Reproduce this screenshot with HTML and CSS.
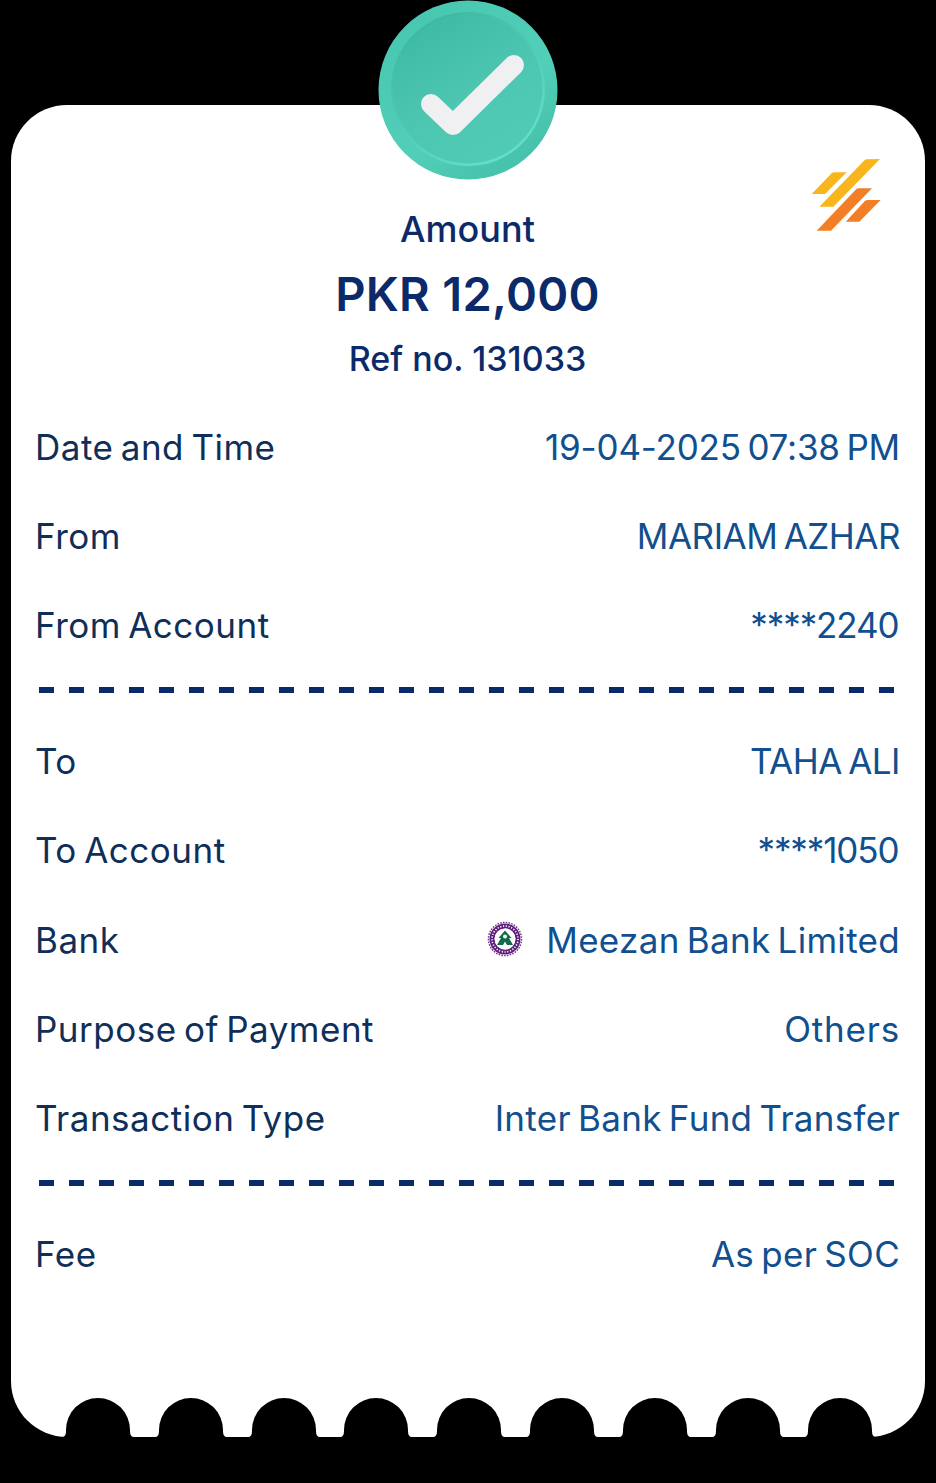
FILE: index.html
```html
<!DOCTYPE html>
<html lang="en">
<head>
<meta charset="utf-8">
<title>Receipt</title>
<link rel="stylesheet" href="styles.css">
</head>
<body>
<main class="card">
  <svg class="badge" viewBox="0 0 180 180" aria-hidden="true">
    <defs>
      <linearGradient id="rim" x1="0.15" y1="0" x2="0.85" y2="1">
        <stop offset="0" stop-color="#47c6af"/>
        <stop offset="0.6" stop-color="#52cfb8"/>
        <stop offset="1" stop-color="#43bea8"/>
      </linearGradient>
      <linearGradient id="ring" x1="0.2" y1="0" x2="0.8" y2="1">
        <stop offset="0" stop-color="#3ab5a0"/>
        <stop offset="0.5" stop-color="#4fcdb7"/>
        <stop offset="1" stop-color="#66e2cd"/>
      </linearGradient>
      <linearGradient id="face" x1="0.2" y1="0" x2="0.8" y2="1">
        <stop offset="0" stop-color="#3eb9a5"/>
        <stop offset="0.55" stop-color="#4dc7b1"/>
        <stop offset="1" stop-color="#52cbb6"/>
      </linearGradient>
    </defs>
    <circle cx="90" cy="90" r="89.5" fill="url(#rim)"/>
    <circle cx="90" cy="89" r="77" fill="url(#ring)"/>
    <circle cx="90" cy="89" r="74.5" fill="url(#face)"/>
    <path d="M53 104 L75 125 L136 65" fill="none" stroke="#f0f0f2" stroke-width="20" stroke-linecap="round" stroke-linejoin="round"/>
  </svg>
  <svg class="logo" viewBox="0 0 330 330" aria-hidden="true">
    <path fill="#f9b51c" d="M65 162 L125 100 Q128 97 133 97 L170 97 L105 162 Z"/>
    <path fill="#f9b51c" d="M88 200 L222 62 Q226 58 232 58 L270 57 L130 200 Z"/>
    <path fill="#f27f25" d="M80 272 L197 149 Q201 145 207 145 L246 145 L123 272 Z"/>
    <path fill="#f27f25" d="M167 245 L224 184 Q228 180 234 180 L272 180 L208 245 Z"/>
  </svg>

  <header class="summary">
    <p class="summary-label">Amount</p>
    <p class="summary-amount">PKR 12,000</p>
    <p class="summary-ref">Ref no. 131033</p>
  </header>

  <section class="rows rows-first">
    <div class="row"><span class="key">Date and Time</span><span class="val val-date">19-04-2025 07:38 PM</span></div>
    <div class="row"><span class="key">From</span><span class="val val-caps">MARIAM AZHAR</span></div>
    <div class="row"><span class="key">From Account</span><span class="val val-mask">****2240</span></div>
  </section>
  <div class="dashes"></div>
  <section class="rows">
    <div class="row"><span class="key">To</span><span class="val val-caps">TAHA ALI</span></div>
    <div class="row"><span class="key">To Account</span><span class="val val-mask">****1050</span></div>
    <div class="row"><span class="key">Bank</span><span class="val val-bank">
      <svg class="bank-logo" viewBox="0 0 36 36" aria-hidden="true">
        <circle cx="18" cy="18" r="16.6" fill="none" stroke="#7a2f8f" stroke-width="1.4" stroke-dasharray="1.6 1.2"/>
        <circle cx="18" cy="18" r="13" fill="none" stroke="#5f1f7c" stroke-width="5"/>
        <circle cx="18" cy="18" r="13" fill="none" stroke="#fff" stroke-width="1.6" stroke-dasharray="1.2 1.6"/>
        <circle cx="18" cy="18" r="10.4" fill="#fff"/>
        <path fill="#0f6b4a" d="M18 9.5 L24.5 17 L22 17 L26 24 L20 24 L18 20.5 L16 24 L10 24 L14 17 L11.5 17 Z"/>
        <circle cx="18" cy="15.5" r="2" fill="#fff"/>
      </svg>
      <span>Meezan Bank Limited</span></span></div>
    <div class="row"><span class="key">Purpose of Payment</span><span class="val val-short">Others</span></div>
    <div class="row"><span class="key">Transaction Type</span><span class="val">Inter Bank Fund Transfer</span></div>
  </section>
  <div class="dashes"></div>
  <section class="rows">
    <div class="row"><span class="key">Fee</span><span class="val">As per SOC</span></div>
  </section>

  <div class="notches" aria-hidden="true">
    <svg class="notch" viewBox="0 0 72 39"><path d="M0 39 Q4 39 4 33 L4 32 A32 32 0 0 1 68 32 L68 33 Q68 39 72 39 Z"/></svg>
    <svg class="notch" viewBox="0 0 72 39"><path d="M0 39 Q4 39 4 33 L4 32 A32 32 0 0 1 68 32 L68 33 Q68 39 72 39 Z"/></svg>
    <svg class="notch" viewBox="0 0 72 39"><path d="M0 39 Q4 39 4 33 L4 32 A32 32 0 0 1 68 32 L68 33 Q68 39 72 39 Z"/></svg>
    <svg class="notch" viewBox="0 0 72 39"><path d="M0 39 Q4 39 4 33 L4 32 A32 32 0 0 1 68 32 L68 33 Q68 39 72 39 Z"/></svg>
    <svg class="notch" viewBox="0 0 72 39"><path d="M0 39 Q4 39 4 33 L4 32 A32 32 0 0 1 68 32 L68 33 Q68 39 72 39 Z"/></svg>
    <svg class="notch" viewBox="0 0 72 39"><path d="M0 39 Q4 39 4 33 L4 32 A32 32 0 0 1 68 32 L68 33 Q68 39 72 39 Z"/></svg>
    <svg class="notch" viewBox="0 0 72 39"><path d="M0 39 Q4 39 4 33 L4 32 A32 32 0 0 1 68 32 L68 33 Q68 39 72 39 Z"/></svg>
    <svg class="notch" viewBox="0 0 72 39"><path d="M0 39 Q4 39 4 33 L4 32 A32 32 0 0 1 68 32 L68 33 Q68 39 72 39 Z"/></svg>
    <svg class="notch" viewBox="0 0 72 39"><path d="M0 39 Q4 39 4 33 L4 32 A32 32 0 0 1 68 32 L68 33 Q68 39 72 39 Z"/></svg>
  </div>
</main>
</body>
</html>
```
FILE: styles.css
```css
html, body { margin: 0; padding: 0; background: #000; }
body { height: 1483px; overflow: hidden; font-family: "Inter", "Liberation Sans", sans-serif; }
p { margin: 0; }

.card {
  position: relative;
  box-sizing: border-box;
  width: 914px;
  height: 1332px;
  margin: 105px 0 0 11px;
  padding: 0 25px 0 24px;
  background: #fff;
  border-radius: 56px;
}

.badge { position: absolute; left: 367px; top: -105px; width: 180px; height: 180px; }
.logo { position: absolute; left: 779px; top: 35px; width: 110px; height: 110px; }

.summary { padding-top: 99px; text-align: center; color: #0b2a6a; }
.summary-label { height: 51px; line-height: 51px; font-size: 36px; font-weight: 500; }
.summary-amount { height: 78px; line-height: 78px; font-size: 47px; font-weight: 600; letter-spacing: 0.3px; }
.summary-ref { height: 51px; line-height: 51px; font-size: 34px; font-weight: 500; }

.rows-first { margin-top: 18px; }
.row {
  display: flex;
  justify-content: space-between;
  align-items: center;
  height: 89.2px;
  font-size: 35px;
  letter-spacing: 0.3px;
  word-spacing: -3px;
}
.key { color: #0f2f58; letter-spacing: 0.5px; }
.val { color: #114f8e; }
.val-date { letter-spacing: -0.2px; }
.val-caps { letter-spacing: -0.5px; }
.val-mask { letter-spacing: -1.1px; margin-right: 1.5px; }
.val-short { letter-spacing: 0.8px; }
.val-bank { display: flex; align-items: center; gap: 23px; }
.bank-logo { width: 36px; height: 36px; margin-top: -2px; }

.dashes {
  width: 855px;
  height: 6px;
  margin: 17px 0 24px 4px;
  background: repeating-linear-gradient(90deg, #0b2a6a 0 15px, transparent 15px 30px);
}

.notches {
  position: absolute;
  left: 51px;
  bottom: 0;
  display: flex;
  gap: 20.8px;
}
.notch { display: block; width: 72px; height: 39px; fill: #000; }
```
